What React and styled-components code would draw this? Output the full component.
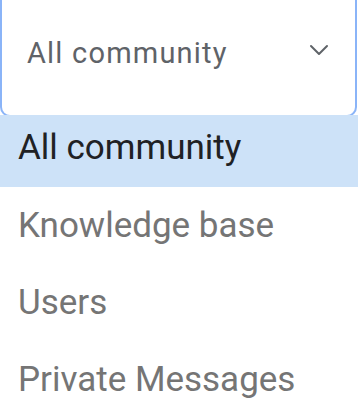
import React from "react";
import styled, { createGlobalStyle } from "styled-components";

const Global = createGlobalStyle`
  html, body { margin: 0; padding: 0; background: #ffffff; }
  body { font-family: Roboto, "Noto Sans", Arial, sans-serif; overflow: hidden; }
`;

const Wrapper = styled.div`
  width: 358px;
  height: 400px;
  display: flex;
  flex-direction: column;
`;

const SelectBox = styled.div`
  box-sizing: border-box;
  flex-shrink: 0;
  width: 357px;
  height: 117px;
  border: 2px solid #8ab4f8;
  border-top: none;
  border-radius: 0 0 10px 10px;
  display: flex;
  align-items: center;
  justify-content: space-between;
  padding: 0 26px 10px 25px;
  background: #fff;
`;

const SelectLabel = styled.span`
  font-size: 29px;
  color: #5f6368;
  letter-spacing: 1.2px;
`;

const ChevronWrap = styled.span`
  display: flex;
  margin-bottom: 6px;
`;

const Menu = styled.ul`
  list-style: none;
  margin: -2px 0 0 0;
  padding: 0;
  position: relative;
  z-index: 1;
  flex-shrink: 0;
`;

const Option = styled.li`
  box-sizing: border-box;
  padding-left: 18px;
  font-size: 35px;
  letter-spacing: 0;
  height: ${(p) => (p.$active ? "72px" : "77px")};
  line-height: ${(p) => (p.$active ? "66px" : "77px")};
  color: ${(p) => (p.$active ? "#202124" : "#757575")};
  background: ${(p) => (p.$active ? "#cde2f8" : "transparent")};
  white-space: nowrap;
`;

const Chevron = () => (
  <ChevronWrap>
    <svg width="20" height="12" viewBox="0 0 20 12" fill="none">
      <path d="M2 2 L10 10 L18 2" stroke="#5f6368" strokeWidth="2" strokeLinecap="round" strokeLinejoin="round" />
    </svg>
  </ChevronWrap>
);

const options = ["All community", "Knowledge base", "Users", "Private Messages"];

export default function App() {
  return (
    <>
      <Global />
      <Wrapper>
        <SelectBox>
          <SelectLabel>All community</SelectLabel>
          <Chevron />
        </SelectBox>
        <Menu>
          {options.map((o, i) => (
            <Option key={o} $active={i === 0}>{o}</Option>
          ))}
        </Menu>
      </Wrapper>
    </>
  );
}
